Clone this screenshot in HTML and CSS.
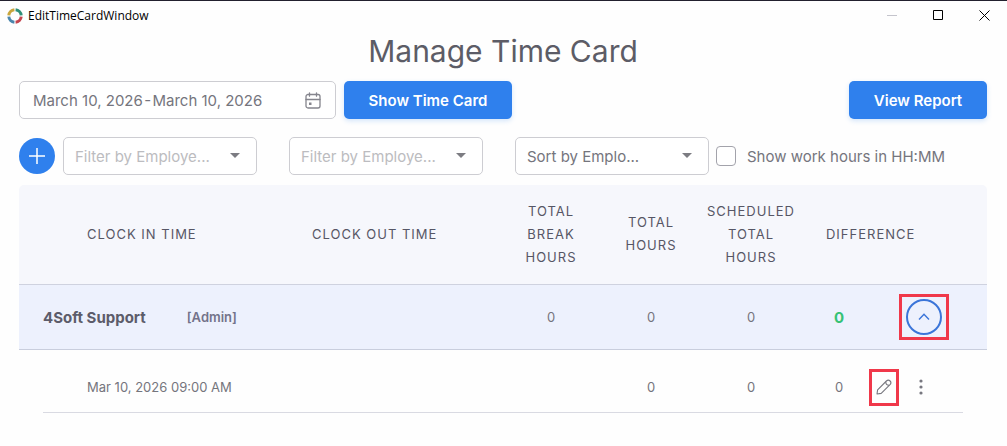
FILE: index.html
```html
<!DOCTYPE html>
<html lang="en">
<head>
    <meta charset="UTF-8">
    <meta name="viewport" content="width=device-width, initial-scale=1.0">
    <title>EditTimeCardWindow</title>
    <link rel="stylesheet" href="styles.css">
</head>
<body>
    <header class="titlebar">
        <svg class="app-logo" width="16" height="16" viewBox="0 0 16 16" fill="none" stroke-width="3">
            <path d="M8.6 1.8A6.2 6.2 0 0 1 14.2 7.4" stroke="#2f8f78"/>
            <path d="M14.2 8.6A6.2 6.2 0 0 1 8.6 14.2" stroke="#c4454f"/>
            <path d="M7.4 14.2A6.2 6.2 0 0 1 1.8 8.6" stroke="#4a86ad"/>
            <path d="M1.8 7.4A6.2 6.2 0 0 1 7.4 1.8" stroke="#c9a63c"/>
        </svg>
        <span class="app-name">EditTimeCardWindow</span>
        <div class="window-buttons">
            <button type="button" aria-label="Minimize" disabled>
                <svg width="11" height="11" viewBox="0 0 11 11" stroke="#c4c4cc"><path d="M0 5.5H10"/></svg>
            </button>
            <button type="button" aria-label="Maximize">
                <svg width="11" height="11" viewBox="0 0 11 11" fill="none" stroke="#000"><path d="M.5 .5H9.5V9.5H.5Z"/></svg>
            </button>
            <button type="button" aria-label="Close">
                <svg width="11" height="11" viewBox="0 0 11 11" stroke="#000"><path d="M.5 .5L10.5 10.5M10.5 .5L.5 10.5"/></svg>
            </button>
        </div>
    </header>

    <main class="content">
        <h1>Manage Time Card</h1>

        <div class="toolbar">
            <div class="date-range">
                <input type="text" aria-label="Date range" value="March 10, 2026&#8202;-&#8202;March 10, 2026">
                <svg width="16" height="17" viewBox="0 0 16 17" fill="none" stroke="#85858d" stroke-width="1.3" stroke-linecap="round">
                    <rect x="1" y="2.5" width="14" height="13.5" rx="2"/>
                    <path d="M1 7.5H15M4.5 .8V4.2M11.5 .8V4.2"/>
                    <rect x="4" y="10.5" width="2.5" height="2.5" fill="#85858d" stroke="none"/>
                </svg>
            </div>
            <button type="button" class="btn btn-show">Show Time Card</button>
            <button type="button" class="btn btn-report">View Report</button>
        </div>

        <div class="filters">
            <button type="button" class="btn-add" aria-label="Add">
                <svg width="16" height="16" viewBox="0 0 16 16" stroke="#fff" stroke-width="1.5"><path d="M8 0V16M0 8H16"/></svg>
            </button>
            <div class="dropdown">
                <select class="placeholder" aria-label="Filter by employee">
                    <option>Filter by Employe...</option>
                </select>
            </div>
            <div class="dropdown">
                <select class="placeholder" aria-label="Filter by employee type">
                    <option>Filter by Employe...</option>
                </select>
            </div>
            <div class="dropdown">
                <select aria-label="Sort by">
                    <option>Sort by Emplo...</option>
                </select>
            </div>
            <label class="check"><input type="checkbox">Show work hours in HH:MM</label>
        </div>

        <table class="timecard">
            <colgroup>
                <col class="col-edge">
                <col>
                <col>
                <col class="col-hours">
                <col class="col-hours">
                <col class="col-hours">
                <col class="col-diff">
                <col class="col-actions">
                <col class="col-edge">
            </colgroup>
            <thead>
                <tr>
                    <th></th>
                    <th class="clock-in">Clock in time</th>
                    <th class="clock-out">Clock out time</th>
                    <th>Total<br>break<br>hours</th>
                    <th>Total<br>hours</th>
                    <th>Scheduled<br>total<br>hours</th>
                    <th class="diff-head" colspan="2">Difference</th>
                    <th></th>
                </tr>
            </thead>
            <tbody>
                <tr class="employee">
                    <td></td>
                    <td colspan="2">
                        <div class="person">
                            <span class="name">4Soft Support</span>
                            <span class="role">[Admin]</span>
                        </div>
                    </td>
                    <td>0</td>
                    <td>0</td>
                    <td>0</td>
                    <td class="diff">0</td>
                    <td>
                        <div class="actions actions-end">
                            <div class="mark">
                                <button type="button" class="btn-collapse" aria-label="Collapse">
                                    <svg width="12" height="8" viewBox="0 0 12 8" fill="none" stroke="#3b75d9" stroke-width="1.4"><path d="M1 6.5L6 1.2L11 6.5"/></svg>
                                </button>
                            </div>
                        </div>
                    </td>
                    <td></td>
                </tr>
                <tr class="entry">
                    <td></td>
                    <td class="clock-in">Mar 10, 2026 09:00 AM</td>
                    <td></td>
                    <td></td>
                    <td>0</td>
                    <td>0</td>
                    <td class="diff">0</td>
                    <td>
                        <div class="actions">
                            <div class="mark">
                                <button type="button" class="btn-icon btn-edit" aria-label="Edit">
                                    <svg width="16" height="16" viewBox="0 0 16 16" fill="none" stroke="#77777f" stroke-width="1.1" stroke-linejoin="round">
                                        <path d="M1 15L1.6 10.8L10.4 2Q12.3 .2 14.1 2Q15.8 3.8 14 5.7L5.2 14.4Z"/>
                                        <path d="M9.8 2.8Q9.6 6.4 13.2 6.3"/>
                                    </svg>
                                </button>
                            </div>
                            <button type="button" class="btn-icon btn-more" aria-label="More">
                                <svg width="4" height="16" viewBox="0 0 4 16" fill="#77777f"><circle cx="2" cy="2" r="1.6"/><circle cx="2" cy="8" r="1.6"/><circle cx="2" cy="14" r="1.6"/></svg>
                            </button>
                        </div>
                    </td>
                    <td></td>
                </tr>
            </tbody>
        </table>
    </main>
</body>
</html>
```
FILE: styles.css
```css
* {
    box-sizing: border-box;
}
body {
    margin: 0;
    font-family: Inter, "Liberation Sans", sans-serif;
    font-size: 15px;
    color: #75757d;
    background-color: #fefefe;
}
button, input, select {
    font: inherit;
    color: inherit;
}
button {
    padding: 0;
    border: none;
    background: none;
    cursor: pointer;
}
svg {
    display: block;
}

/* window title bar */
.titlebar {
    display: flex;
    align-items: center;
    height: 30px;
    padding-left: 7px;
    border-top: 1px solid #22202e;
    font-family: "Open Sans", sans-serif;
    font-size: 12px;
    color: #000;
}
.app-name {
    margin-left: 5px;
}
.window-buttons {
    display: flex;
    margin-left: auto;
}
.window-buttons button {
    display: flex;
    align-items: center;
    justify-content: center;
    width: 46px;
    height: 29px;
}

.content {
    padding: 0 20px 24px 19px;
}
h1 {
    margin: 0;
    padding-bottom: 9px;
    font-size: 30px;
    font-weight: 400;
    line-height: 42px;
    text-align: center;
    color: #5c5c66;
}

/* date range and buttons */
.toolbar {
    display: flex;
    gap: 8px;
}
.date-range {
    display: flex;
    align-items: center;
    width: 317px;
    height: 38px;
    padding: 0 14px 0 13px;
    border: 1px solid #cdcdd2;
    border-radius: 5px;
    background-color: #fff;
}
.date-range input {
    flex: 1;
    min-width: 0;
    padding: 0;
    border: none;
    outline: none;
    background: none;
}
.btn {
    height: 38px;
    border-radius: 5px;
    background-color: #2f80ed;
    box-shadow: 0 2px 5px rgba(47, 128, 237, 0.2);
    font-weight: 600;
    color: #fff;
}
.btn-show {
    width: 168px;
}
.btn-report {
    width: 138px;
    margin-left: auto;
}

/* filters */
.filters {
    display: flex;
    align-items: center;
    margin: 18px 0 10px;
}
.btn-add {
    display: flex;
    align-items: center;
    justify-content: center;
    width: 36px;
    height: 36px;
    margin-right: 8px;
    border-radius: 50%;
    background-color: #2f80ed;
}
.dropdown {
    position: relative;
    width: 194px;
}
.dropdown + .dropdown {
    margin-left: 32px;
}
.dropdown::after {
    content: "";
    position: absolute;
    top: 16px;
    right: 17px;
    border: 5px solid transparent;
    border-top-color: #7c7c82;
    border-bottom: none;
    pointer-events: none;
}
.dropdown select {
    appearance: none;
    width: 100%;
    height: 38px;
    padding: 0 32px 0 11px;
    border: 1px solid #cdcdd2;
    border-radius: 5px;
    background-color: #fff;
}
.dropdown .placeholder {
    color: #bcbcc0;
}
.check {
    display: flex;
    align-items: center;
    margin-left: 7px;
}
.check input {
    appearance: none;
    width: 20px;
    height: 20px;
    margin: 0 11px 0 0;
    border: 1px solid #a3a3ab;
    border-radius: 4px;
    background-color: #fff;
}

/* time card table */
.timecard {
    width: 100%;
    table-layout: fixed;
    border-collapse: separate;
    border-spacing: 0;
    font-size: 13px;
}
.col-edge {
    width: 24px;
}
.col-hours {
    width: 100px;
}
.col-diff {
    width: 62px;
}
.col-actions {
    width: 100px;
}
th, td {
    padding: 0;
    text-align: center;
}
th {
    height: 100px;
    padding-bottom: 1px;
    border-bottom: 1px solid #cfd2df;
    background-color: #f6f7fc;
    font-weight: 400;
    line-height: 23px;
    letter-spacing: 1px;
    text-transform: uppercase;
    color: #565665;
}
th:first-child {
    border-top-left-radius: 5px;
}
th:last-child {
    border-top-right-radius: 5px;
}
.clock-in {
    padding-left: 44px;
    text-align: left;
}
.clock-out {
    padding-left: 40px;
    text-align: left;
}
.diff-head {
    padding-left: 25px;
    text-align: left;
}
.diff {
    padding-left: 14px;
}
.employee td {
    height: 65px;
    border-bottom: 1px solid #c9cedd;
    background-color: #edf1fd;
}
.person {
    display: flex;
    align-items: center;
    gap: 41px;
    color: #5c5c6a;
}
.name {
    font-size: 15px;
    font-weight: 700;
}
.role {
    font-weight: 600;
    color: #73738a;
}
.employee .diff {
    font-size: 15px;
    font-weight: 700;
    color: #36c275;
}
.entry td {
    height: 63px;
    padding-top: 12px;
    border-bottom: 1px solid #d9dae2;
}
.entry td:first-child, .entry td:last-child {
    border-bottom: none;
}
.actions {
    display: flex;
    align-items: center;
    gap: 18px;
    padding-left: 6px;
}
.actions-end {
    justify-content: flex-end;
    padding-right: 14px;
}
.mark {
    border: 3px solid #f0384a;
}
.btn-collapse {
    display: flex;
    align-items: center;
    justify-content: center;
    width: 36px;
    height: 36px;
    margin: 2px 4px;
    border: 2px solid #3b75d9;
    border-radius: 50%;
}
.btn-icon {
    display: flex;
    align-items: center;
    justify-content: center;
}
.btn-edit {
    width: 24px;
    height: 31px;
}
.btn-more {
    width: 8px;
    height: 24px;
}
```
